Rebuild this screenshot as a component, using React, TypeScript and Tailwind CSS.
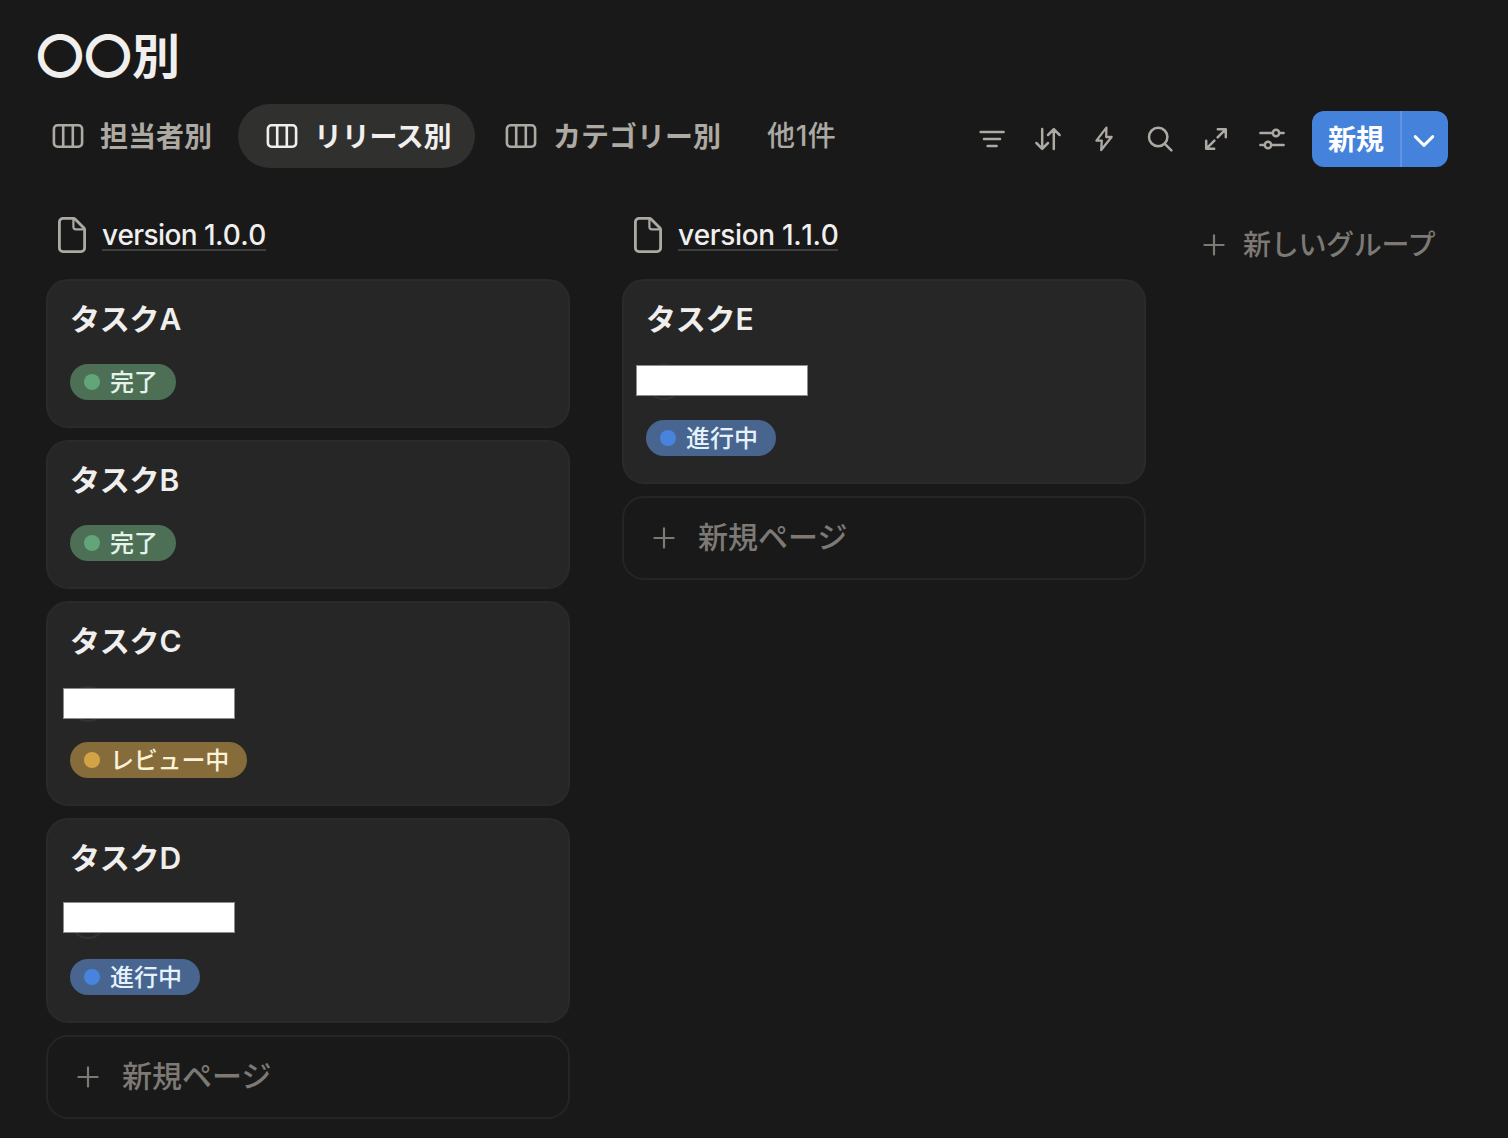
import type { ReactNode } from "react";
import clsx from "clsx";

type Status = "done" | "review" | "progress";

type Task = {
  title: string;
  status: Status;
  // placement of the mask over the assignee row
  mask?: string;
};

type Group = {
  name: string;
  tracking: string;
  tasks: Task[];
};

const groups: Group[] = [
  {
    name: "version 1.0.0",
    tracking: "tracking-[-0.6px]",
    tasks: [
      { title: "タスクA", status: "done" },
      { title: "タスクB", status: "done" },
      { title: "タスクC", status: "review", mask: "-left-[7px] top-[2px]" },
      { title: "タスクD", status: "progress", mask: "-left-[7px] -top-px" },
    ],
  },
  {
    name: "version 1.1.0",
    tracking: "tracking-[-0.35px]",
    tasks: [{ title: "タスクE", status: "progress", mask: "-left-[10px] top-px" }],
  },
];

const statusStyles: Record<Status, { label: string; pill: string; dot: string }> = {
  done: { label: "完了", pill: "bg-[#4d6f56] text-[#e6f3ea]", dot: "bg-[#62a579]" },
  review: { label: "レビュー中", pill: "bg-[#856c3a] text-[#fbf2d8] tracking-[-0.2px]", dot: "bg-[#d2a446]" },
  progress: { label: "進行中", pill: "bg-[#48658f] text-[#e5f2fc]", dot: "bg-[#4784dd]" },
};

function BoardIcon() {
  return (
    <svg className="h-8 w-8 shrink-0" viewBox="0 0 32 32" fill="none" stroke="currentColor" strokeWidth="2.6">
      <rect x="1.9" y="5.3" width="28.2" height="21.4" rx="3.6" />
      <path d="M11.2 5.2v21.6M20.8 5.2v21.6" />
    </svg>
  );
}

function PageIcon() {
  return (
    <svg className="h-9 w-7 shrink-0" viewBox="0 0 28 36" fill="none" stroke="#ada9a3" strokeWidth="2.8" strokeLinejoin="round">
      <path d="M5 1.4h10.6a2 2 0 0 1 1.4.6l9 9a2 2 0 0 1 .6 1.4V31a3.6 3.6 0 0 1-3.6 3.6H5A3.6 3.6 0 0 1 1.4 31V5A3.6 3.6 0 0 1 5 1.4z" />
      <path d="M15.4 1.6v8.2a2.6 2.6 0 0 0 2.6 2.6h8.4" strokeWidth="2.2" />
    </svg>
  );
}

function PlusIcon() {
  return (
    <svg className="h-6 w-6 shrink-0" viewBox="0 0 24 24" fill="none" stroke="currentColor" strokeWidth="2.2" strokeLinecap="round">
      <path d="M12 2.4v19.2M2.4 12h19.2" />
    </svg>
  );
}

function ToolButton({ label, children }: { label: string; children: ReactNode }) {
  return (
    <button type="button" aria-label={label} className="flex w-14 items-center justify-center">
      <svg
        className="h-8 w-8"
        viewBox="0 0 32 32"
        fill="none"
        stroke="currentColor"
        strokeWidth="2.5"
        strokeLinecap="round"
        strokeLinejoin="round"
      >
        {children}
      </svg>
    </button>
  );
}

function Tab({ label, active }: { label: string; active?: boolean }) {
  return (
    <button
      type="button"
      className={clsx(
        "flex h-16 items-center gap-4 rounded-full text-[28px] leading-none font-bold whitespace-nowrap",
        active ? "w-[237px] bg-[#30302e] pl-7 text-[#f0efed]" : "text-[#ada9a3]",
      )}
    >
      <BoardIcon />
      <span className={clsx("pt-0.5", active && "tracking-[-0.3px]")}>{label}</span>
    </button>
  );
}

function Toolbar() {
  return (
    <div className="flex h-14 text-[#ada9a3]">
      <ToolButton label="フィルター">
        <path d="M4.6 9h23M8 16h16M11.6 23h9" />
      </ToolButton>
      <ToolButton label="並べ替え">
        <path d="M10.2 6v19.6M4.4 20l5.8 5.8L16 20M21.8 26V6.4M16 12l5.8-5.8 5.8 5.8" />
      </ToolButton>
      <ToolButton label="オートメーション">
        <path d="M18.4 4.6 8.4 17.6h5.4l-.6 9.4L23.6 14h-5.4z" strokeWidth="2.3" />
      </ToolButton>
      <ToolButton label="検索">
        <circle cx="14.2" cy="14" r="9.2" />
        <path d="m20.8 20.8 6.6 6.6" />
      </ToolButton>
      <ToolButton label="拡大">
        <path d="M17.8 6.2h8v8M25.4 6.6l-7.8 7.8M14.2 25.8h-8v-8M6.6 25.4l7.8-7.8" />
      </ToolButton>
      <ToolButton label="設定">
        <path d="M4.4 10h12.4M23.2 10h4.4M4.4 22h4.4M15.2 22h12.4" />
        <circle cx="20" cy="10" r="3.2" />
        <circle cx="12" cy="22" r="3.2" />
      </ToolButton>
      <div className="ml-3 flex w-[136px] overflow-hidden rounded-xl bg-[#4582db] text-white">
        <button type="button" className="w-[88px] pt-0.5 text-[28px] leading-none font-bold">
          新規
        </button>
        <button
          type="button"
          aria-label="メニュー"
          className="flex flex-1 items-center justify-center border-l-2 border-[#5f94e1] pr-0.5"
        >
          <svg className="mt-1 h-6 w-6" viewBox="0 0 24 24" fill="none" stroke="currentColor" strokeWidth="2.9" strokeLinecap="round" strokeLinejoin="round">
            <path d="m3.2 7.6 8.8 8.8 8.8-8.8" />
          </svg>
        </button>
      </div>
    </div>
  );
}

function StatusPill({ status }: { status: Status }) {
  const { label, pill, dot } = statusStyles[status];
  return (
    <span className={clsx("inline-flex h-9 items-center rounded-full pr-[18px] pl-3.5 text-[24px] leading-none font-medium", pill)}>
      <span className={clsx("mr-2.5 h-4 w-4 rounded-full", dot)} />
      <span className="pt-0.5">{label}</span>
    </span>
  );
}

function TaskCard({ task }: { task: Task }) {
  return (
    <article
      className={clsx(
        "flex flex-col items-start rounded-[22px] border-2 border-[#2a2a2a] bg-[#262626] px-[22px]",
        task.mask ? "h-[205px]" : "h-[149px]",
      )}
    >
      <h3 className="mt-4 mb-[23px] text-[30px] leading-[44px] font-semibold tracking-[-0.2px] text-[#f0efed]">{task.title}</h3>
      {task.mask ? (
        <div className="relative mb-5 h-9 w-9 rounded-full border-2 border-[#333333]">
          <div className="absolute -inset-0.5">
            <div className={clsx("absolute h-[31px] w-[172px] border border-[#8c8c8c] bg-white", task.mask)} />
          </div>
        </div>
      ) : null}
      <StatusPill status={task.status} />
    </article>
  );
}

function BoardColumn({ group }: { group: Group }) {
  return (
    <section className="flex w-[524px] flex-col gap-3">
      <header className="flex h-[50px] items-start gap-4 pl-3">
        <PageIcon />
        <h2
          className={clsx(
            "border-b-2 border-[#3f3f3e] pt-1 text-[28px] leading-7 font-medium text-[#f0efed] [font-kerning:none]",
            group.tracking,
          )}
        >
          {group.name}
        </h2>
      </header>
      {group.tasks.map((task) => (
        <TaskCard key={task.title} task={task} />
      ))}
      <button
        type="button"
        className="flex h-[84px] items-center gap-[22px] rounded-[22px] border-2 border-[#252525] pl-7 text-[30px] leading-none font-medium text-[#7d7a75]"
      >
        <PlusIcon />
        <span className="pb-0.5">新規ページ</span>
      </button>
    </section>
  );
}

export default function App() {
  return (
    <main className="h-[1138px] w-[1508px] overflow-hidden bg-[#191919] font-[Inter,'Noto_Sans_CJK_JP',sans-serif]">
      <h1 className="h-[104px] pt-[25px] pl-9 text-[48px] leading-[64px] font-bold text-[#f0efed]">〇〇別</h1>
      <div className="flex h-16 items-start justify-between pr-[60px] pl-[52px]">
        <nav className="flex items-center">
          <Tab label="担当者別" />
          <div className="mr-[30px] ml-[26px]">
            <Tab label="リリース別" active />
          </div>
          <Tab label="カテゴリー別" />
          <button type="button" className="ml-[46px] text-[28px] leading-none font-medium tracking-[0.6px] text-[#ada9a3]">
            他1件
          </button>
        </nav>
        <div className="pt-[7px]">
          <Toolbar />
        </div>
      </div>
      <div className="flex gap-[52px] pt-[49px] pl-[46px]">
        {groups.map((group) => (
          <BoardColumn key={group.name} group={group} />
        ))}
        <button
          type="button"
          className="mt-3 flex h-8 items-center gap-[17px] pl-1 text-[28px] leading-none font-medium tracking-[-0.3px] whitespace-nowrap text-[#7d7a75]"
        >
          <PlusIcon />
          新しいグループ
        </button>
      </div>
    </main>
  );
}
